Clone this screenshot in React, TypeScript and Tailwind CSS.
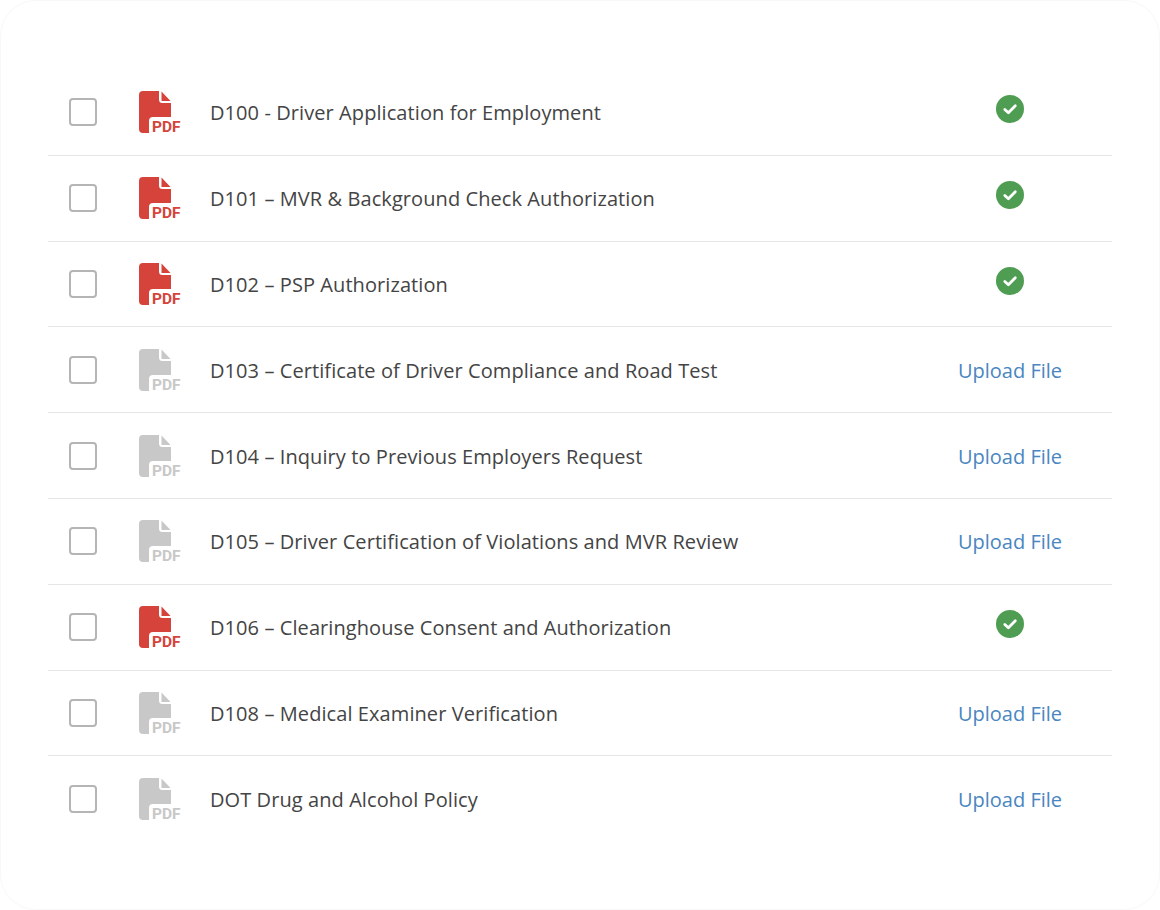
const rows = [
  { name: "D100 - Driver Application for Employment", done: true },
  { name: "D101 – MVR & Background Check Authorization", done: true },
  { name: "D102 – PSP Authorization", done: true },
  { name: "D103 – Certificate of Driver Compliance and Road Test", done: false },
  { name: "D104 – Inquiry to Previous Employers Request", done: false },
  { name: "D105 – Driver Certification of Violations and MVR Review", done: false },
  { name: "D106 – Clearinghouse Consent and Authorization", done: true },
  { name: "D108 – Medical Examiner Verification", done: false },
  { name: "DOT Drug and Alcohol Policy", done: false },
];

function PdfIcon({ active }: { active: boolean }) {
  const color = active ? "#d5433a" : "#c8c8c8";
  return (
    <svg width="44" height="44" viewBox="0 0 44 44" className="shrink-0">
      <path
        d="M4 0H20V8.5a3.5 3.5 0 0 0 3.5 3.5H32V26H14a4 4 0 0 0-4 4V42H4a4 4 0 0 1-4-4V4a4 4 0 0 1 4-4Z"
        fill={color}
      />
      <path d="M22.5 .5L31.5 10H22.5Z" fill={color} />
      <text
        x="13"
        y="41"
        fill={color}
        fontFamily="'Roboto', 'Liberation Sans', sans-serif"
        fontSize="15.5"
        fontWeight="700"
      >
        PDF
      </text>
    </svg>
  );
}

function DoneIcon() {
  return (
    <svg width="28" height="28" viewBox="0 0 28 28" className="-translate-y-[3px]">
      <circle cx="14" cy="14" r="14" fill="#4e9d52" />
      <path
        d="M8.8 14.4l3.6 3.4 6.9-7"
        fill="none"
        stroke="#fff"
        strokeWidth="2.8"
        strokeLinecap="round"
        strokeLinejoin="round"
      />
    </svg>
  );
}

export default function App() {
  return (
    <div className="w-[1160px] h-[910px] bg-white overflow-hidden">
      <div className="h-full rounded-[36px] border border-[#f8f8f8] px-[47px] pt-[69px] font-['Open_Sans',sans-serif]">
        {rows.map((row, i) => (
          <div
            key={row.name}
            className={`flex items-center h-[85.8px] ${i < rows.length - 1 ? "border-b border-[#e6e6e6]" : ""}`}
          >
            <div className="ml-[21px] w-[28px] h-[28px] rounded-[4px] border-2 border-[#b5b5b5] bg-white shrink-0" />
            <div className="ml-[42px] mr-[27px] pt-[2px]">
              <PdfIcon active={row.done} />
            </div>
            <div className="flex-1 pt-[2px] text-[20px] tracking-[0.08px] text-[#444444]">{row.name}</div>
            <div className="w-[104px] mr-[50px] flex justify-center">
              {row.done ? (
                <DoneIcon />
              ) : (
                <a className="pt-[2px] text-[20px] text-[#4a86c0] whitespace-nowrap">Upload File</a>
              )}
            </div>
          </div>
        ))}
      </div>
    </div>
  );
}
